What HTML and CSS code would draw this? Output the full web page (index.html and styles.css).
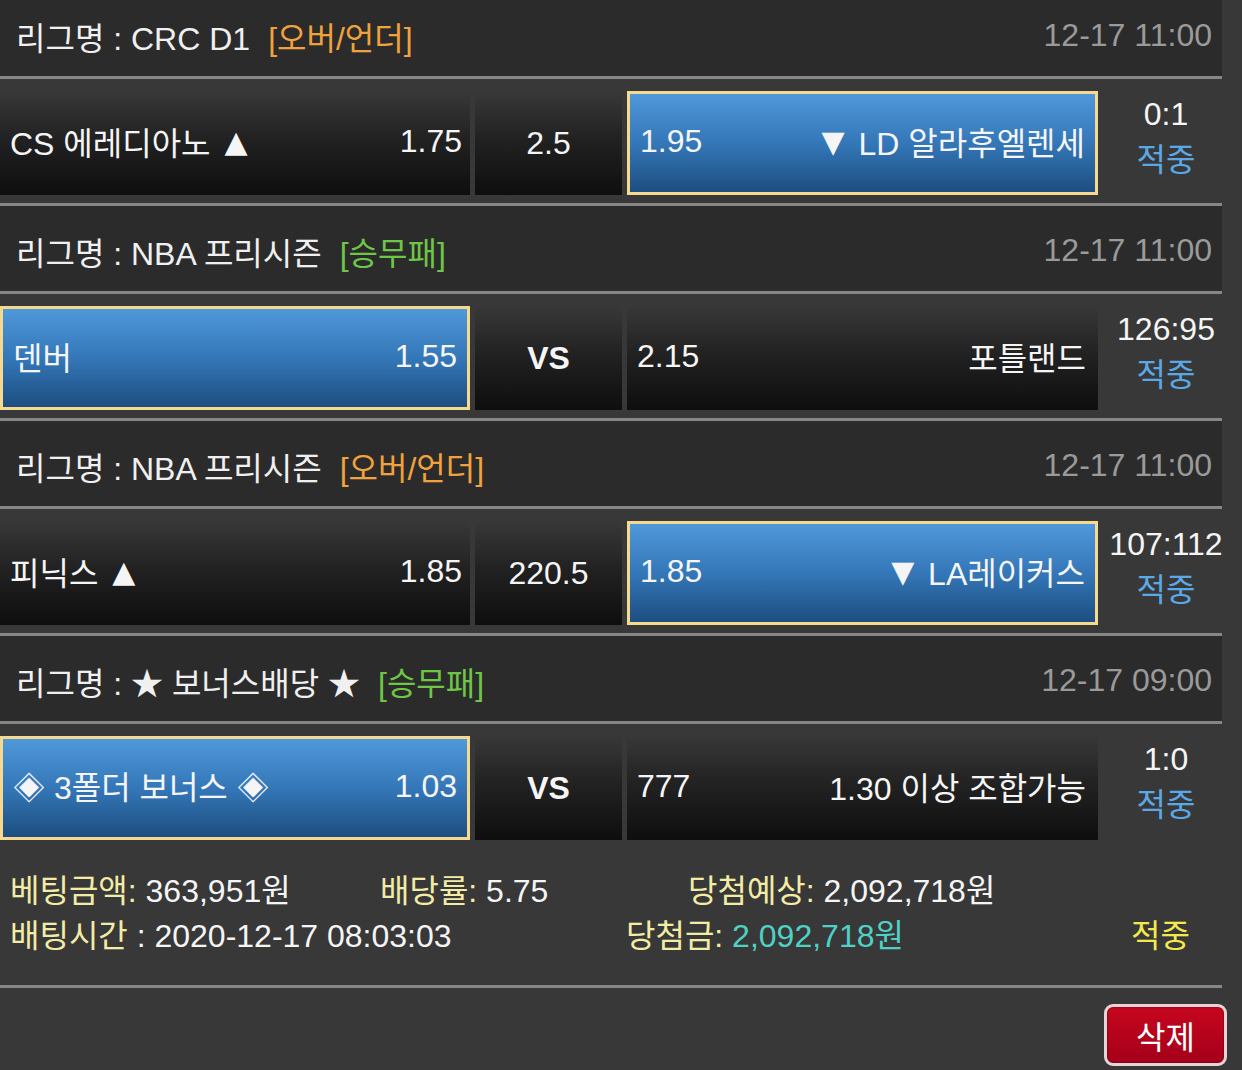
FILE: index.html
```html
<!DOCTYPE html>
<html lang="ko">
<head>
<meta charset="utf-8">
<title>배팅내역</title>
<link rel="stylesheet" href="styles.css">
</head>
<body>
<div class="slip">
  <div class="game">
    <div class="league"><span class="lg">리그명 : CRC D1</span><span class="type ou">[오버/언더]</span><span class="time">12-17 11:00</span></div>
    <div class="bets">
      <div class="cell home"><span class="name">CS 에레디아노 <span class="tri up">▲</span></span><span class="odd">1.75</span></div>
      <div class="cell mid">2.5</div>
      <div class="cell away sel"><span class="odd">1.95</span><span class="name"><span class="tri down">▼</span> LD 알라후엘렌세</span></div>
      <div class="score"><div class="sc">0:1</div><div class="hit">적중</div></div>
    </div>
  </div>
  <div class="game">
    <div class="league"><span class="lg">리그명 : NBA 프리시즌</span><span class="type wdl">[승무패]</span><span class="time">12-17 11:00</span></div>
    <div class="bets">
      <div class="cell home sel"><span class="name">덴버</span><span class="odd">1.55</span></div>
      <div class="cell mid vs">VS</div>
      <div class="cell away"><span class="odd">2.15</span><span class="name">포틀랜드</span></div>
      <div class="score"><div class="sc">126:95</div><div class="hit">적중</div></div>
    </div>
  </div>
  <div class="game">
    <div class="league"><span class="lg">리그명 : NBA 프리시즌</span><span class="type ou">[오버/언더]</span><span class="time">12-17 11:00</span></div>
    <div class="bets">
      <div class="cell home"><span class="name">피닉스 <span class="tri up">▲</span></span><span class="odd">1.85</span></div>
      <div class="cell mid">220.5</div>
      <div class="cell away sel"><span class="odd">1.85</span><span class="name"><span class="tri down">▼</span> LA레이커스</span></div>
      <div class="score"><div class="sc">107:112</div><div class="hit">적중</div></div>
    </div>
  </div>
  <div class="game last">
    <div class="league"><span class="lg">리그명 : ★ 보너스배당 ★</span><span class="type wdl">[승무패]</span><span class="time">12-17 09:00</span></div>
    <div class="bets">
      <div class="cell home sel"><span class="name">◈ 3폴더 보너스 ◈</span><span class="odd">1.03</span></div>
      <div class="cell mid vs">VS</div>
      <div class="cell away"><span class="odd">777</span><span class="name">1.30 이상 조합가능</span></div>
      <div class="score"><div class="sc">1:0</div><div class="hit">적중</div></div>
    </div>
  </div>
  <div class="summary">
    <div class="row row1">
      <div class="item"><span class="lbl">베팅금액:</span> 363,951원</div>
      <div class="item"><span class="lbl">배당률:</span> 5.75</div>
      <div class="item"><span class="lbl">당첨예상:</span> 2,092,718원</div>
    </div>
    <div class="row row2">
      <div class="item"><span class="lbl">배팅시간</span> : 2020-12-17 08:03:03</div>
      <div class="item"><span class="lbl">당첨금:</span> <span class="win">2,092,718원</span></div>
      <div class="item result">적중</div>
    </div>
  </div>
  <div class="actions"><button class="del" type="button">삭제</button></div>
</div>
</body>
</html>
```
FILE: styles.css
```css
html, body {
  margin: 0;
  padding: 0;
  background: #383838;
}
body {
  font-family: "Liberation Sans", "Noto Sans CJK KR", sans-serif;
  font-size: 32px;
  color: #f2f2f2;
  overflow: hidden;
}
.slip {
  width: 1222px;
  margin-top: -9px;
}
.league {
  height: 88px;
  background: #2b2b2b;
  display: flex;
  align-items: center;
  padding: 4px 10px 0 16px;
  box-sizing: border-box;
  border-bottom: 3px solid #868686;
  white-space: nowrap;
}
.lg { color: #f0f0f0; }
.type { margin-left: 18px; }
.ou { color: #f0a23c; }
.wdl { color: #6ec646; }
.time { margin-left: auto; color: #9a9a9a; }
.bets {
  display: flex;
  padding: 12px 0 8px;
  border-bottom: 3px solid #868686;
}
.game.last .bets { border-bottom: none; }
.cell {
  height: 104px;
  box-sizing: border-box;
  display: flex;
  align-items: center;
  flex-shrink: 0;
  white-space: nowrap;
  background: linear-gradient(#383838 0%, #222 45%, #0e0e0e 100%);
  color: #f5f5f5;
}
.tri {
  font-family: "DejaVu Sans", sans-serif;
  font-size: 30px;
  position: relative;
  top: -3px;
}
.tri.up { margin-left: 5px; }
.tri.down { margin-right: 5px; }
.home { width: 470px; justify-content: space-between; padding: 0 8px 4px 10px; }
.mid { width: 147px; margin: 0 5px; justify-content: center; }
.away { width: 471px; justify-content: space-between; padding: 0 12px 4px 10px; }
.vs { font-weight: 700; }
.cell.sel {
  background: linear-gradient(#4f98da 0%, #3477b8 50%, #1d4e80 100%);
  border: 3px solid #f4d98e;
}
.home.sel { padding-left: 10px; padding-right: 10px; }
.away.sel { padding-left: 10px; padding-right: 10px; }
.score {
  width: 124px;
  padding: 0 0 12px 12px;
  box-sizing: border-box;
  display: flex;
  flex-direction: column;
  align-items: center;
  justify-content: center;
  line-height: 46px;
  white-space: nowrap;
}
.sc { color: #f5f5f5; }
.hit { color: #5ba8e6; }
.summary {
  padding: 17px 0 30px;
  border-bottom: 3px solid #868686;
}
.row { display: grid; height: 45px; align-items: center; }
.row1 { grid-template-columns: 370px 308px auto; }
.row2 { grid-template-columns: 616px 505px auto; }
.item { padding-left: 10px; white-space: nowrap; color: #f5f5f5; }
.lbl { color: #f3eca6; }
.win { color: #4fd1c6; }
.result { color: #f4e94c; }
.actions {
  display: flex;
  justify-content: flex-end;
  padding: 16px 0 0;
  width: 1227px;
}
.del {
  width: 123px;
  height: 62px;
  border: 3px solid #e6d4d6;
  border-radius: 9px;
  background: linear-gradient(#c6061e, #a5001a);
  color: #fff;
  font-family: "Liberation Sans", "Noto Sans CJK KR", sans-serif;
  font-size: 32px;
  padding: 0;
  box-shadow: inset 0 0 2px rgba(0,0,0,.6);
}
```
